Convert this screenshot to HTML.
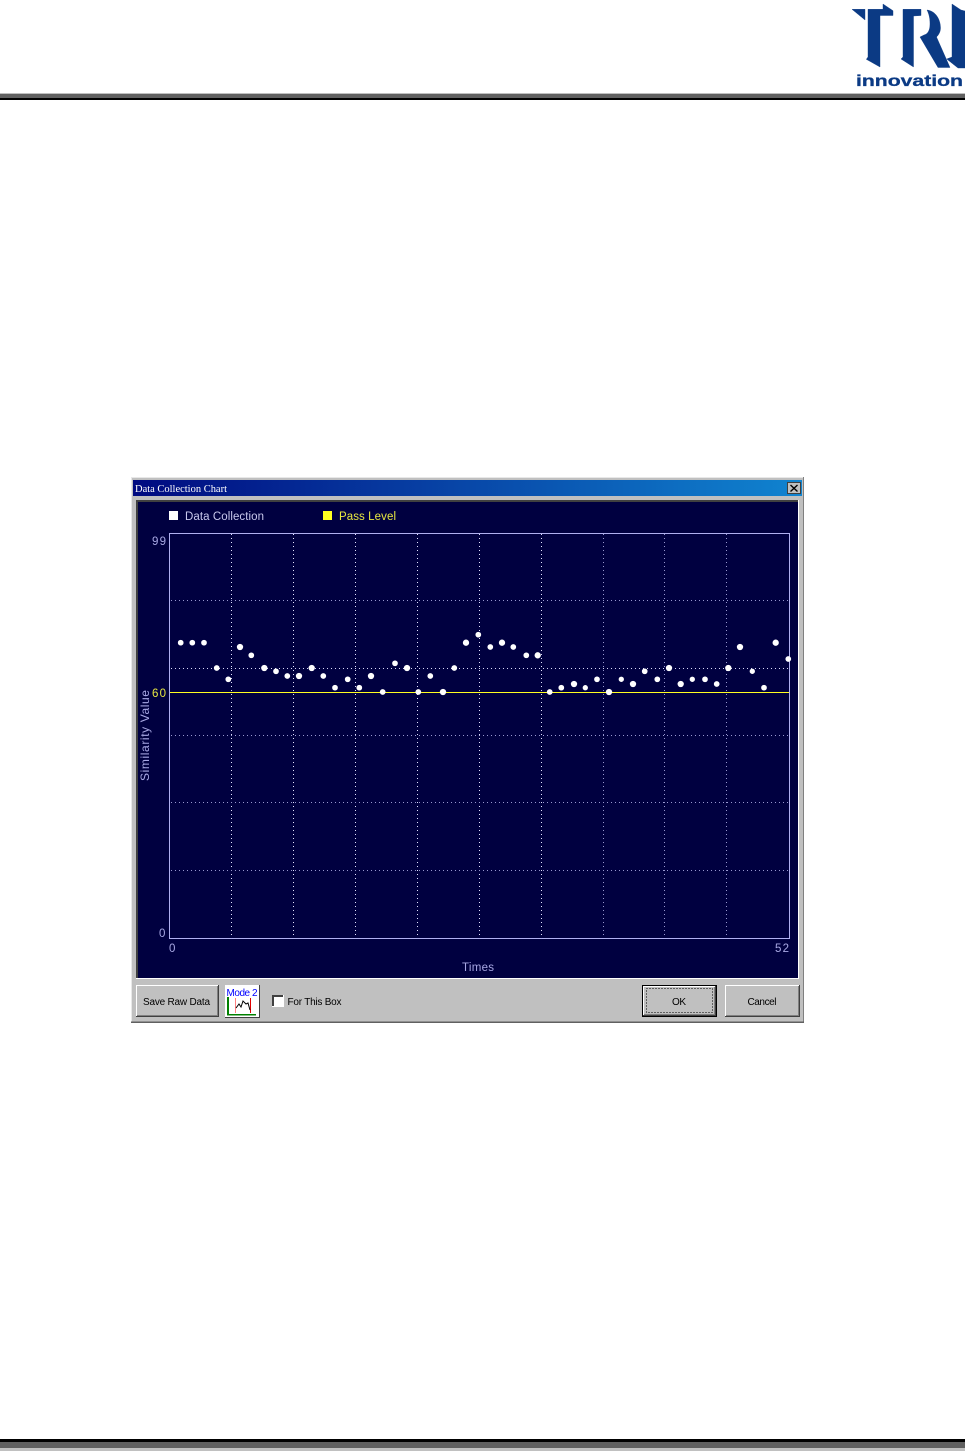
<!DOCTYPE html>
<html>
<head>
<meta charset="utf-8">
<title>Data Collection Chart</title>
<style>
html,body{margin:0;padding:0;background:#fff}
body{width:965px;height:1451px;overflow:hidden;position:relative}
svg{position:absolute;left:0;top:0;display:block}
text{font-family:"Liberation Sans",sans-serif}
</style>
</head>
<body>
<svg width="965" height="1451" viewBox="0 0 965 1451" xmlns="http://www.w3.org/2000/svg">
<defs>
<linearGradient id="tb" x1="0" x2="1" y1="0" y2="0"><stop offset="0" stop-color="#000a80"/><stop offset="1" stop-color="#1084d0"/></linearGradient>
</defs>

<!-- header logo -->
<g fill="#0b3a84" stroke="#0b3a84" stroke-width="0.4">
<polygon points="852,9.3 865,9.3 865,20"/>
<polygon points="868,9.3 883,9.3 883,4 893,10.7 893,15.500 880,15.500 880,67 866.300,59.300 868,57"/>
<polygon points="903,9.3 921,9.3 921,15.500 913.500,16 913.500,67 901,59 903,57"/>
<path d="M927 10C936 11 940.500 20 940.500 28C940.500 32 938.500 35 936.500 37L950 67.500H938L920 37L924 35C928 34 930 30 930 24C930 18 929 14 927 10Z"/>
<polygon points="952,9 952,4 961,10 965,11 965,68 958,68 946.700,59 952,57"/>
</g>
<text x="856" y="86" font-size="16" font-weight="bold" fill="#0b3a84" stroke="#0b3a84" stroke-width="0.3" textLength="107" lengthAdjust="spacingAndGlyphs">innovation</text>

<!-- header rule -->
<rect x="0" y="93" width="965" height="1" fill="#c0c0c0"/>
<rect x="0" y="94" width="965" height="4" fill="#606060"/>
<rect x="0" y="98" width="965" height="2" fill="#000"/>

<!-- footer rule -->
<rect x="0" y="1439" width="965" height="3" fill="#000"/>
<rect x="0" y="1442" width="965" height="6" fill="#606060"/>
<rect x="0" y="1448" width="965" height="3" fill="#c0c0c0"/>

<!-- dialog -->
<rect x="131" y="477" width="673" height="546" fill="#c0c0c0"/>
<rect x="131" y="477" width="673" height="1" fill="#e8e8e8"/>
<rect x="131" y="477" width="1" height="546" fill="#e8e8e8"/>
<rect x="803" y="477" width="1" height="546" fill="#808080"/>
<rect x="131" y="1021.500" width="673" height="1.500" fill="#606060"/>
<rect x="133" y="480" width="669" height="16" fill="url(#tb)"/>
<text x="135" y="492" font-size="10.500" fill="#fff" style="font-family:'Liberation Serif',serif" textLength="92" lengthAdjust="spacingAndGlyphs">Data Collection Chart</text>
<rect x="787.500" y="482.500" width="13" height="11" fill="#c0c0c0" stroke="#404040" stroke-width="1"/>
<path d="M790.500 485L797.500 491.500M797.500 485L790.500 491.500" stroke="#000" stroke-width="1.400"/>

<!-- chart panel -->
<rect x="136" y="500" width="663" height="479" fill="#fff"/>
<rect x="136" y="500" width="662" height="478" fill="#404040"/>
<rect x="138" y="502" width="660" height="476" fill="#000040"/>

<!-- legend -->
<rect x="169" y="511" width="9" height="9" fill="#fff"/>
<text x="185" y="520" font-size="11.500" fill="#c8c8ec" textLength="79" lengthAdjust="spacing">Data Collection</text>
<rect x="323" y="511" width="9" height="9" fill="#ffff20"/>
<text x="339" y="520" font-size="11.500" fill="#e8e840" textLength="57" lengthAdjust="spacing">Pass Level</text>

<!-- grid -->
<g shape-rendering="crispEdges" fill="none">
<g stroke="#e4e4ff" stroke-dasharray="1 3">
<path d="M231.500 534V938M293.500 534V938M355.500 534V938M417.500 534V938M479.500 534V938M541.500 534V938"/>
</g>
<g stroke="#9898d0" stroke-dasharray="1 3">
<path d="M603.500 534V938M664.500 534V938M726.500 534V938"/>
<path d="M171 600.500H789"/>
<path d="M171 735.500H789M171 802.500H789M171 870.500H789"/>
</g>
<path d="M171 668.500H789" stroke="#d8d8f8" stroke-dasharray="1 3"/>
<rect x="169.500" y="533.500" width="620" height="405" stroke="#b0b0f0"/>
<path d="M170 692.500H789" stroke="#ffff20"/>
</g>

<!-- axis labels -->
<g font-size="11.500" fill="#a8a8e4">
<text x="152" y="545" textLength="14" lengthAdjust="spacing">99</text>
<text x="152" y="697" fill="#e8e840" textLength="14" lengthAdjust="spacing">60</text>
<text x="159" y="937">0</text>
<text x="169" y="952">0</text>
<text x="775" y="952" textLength="14" lengthAdjust="spacing">52</text>
<text x="462" y="971" textLength="32" lengthAdjust="spacing">Times</text>
<text transform="translate(149,781) rotate(-90)" font-size="12" textLength="91" lengthAdjust="spacing">Similarity Value</text>
</g>

<!-- data points -->
<g fill="#fff" stroke="#fff" stroke-width="0.7">
<circle cx="180.700" cy="642.700" r="2.500"/><circle cx="192.300" cy="642.700" r="2.500"/><circle cx="204" cy="642.700" r="2.500"/><circle cx="216.700" cy="668" r="2.500"/><circle cx="228.300" cy="679.300" r="2.500"/><circle cx="240" cy="647" r="2.800"/><circle cx="251.300" cy="655.300" r="2.500"/><circle cx="264.300" cy="668" r="2.800"/><circle cx="276" cy="671.300" r="2.500"/><circle cx="287.300" cy="676" r="2.500"/><circle cx="299" cy="676" r="2.800"/><circle cx="311.700" cy="668" r="2.800"/><circle cx="323.300" cy="676" r="2.500"/><circle cx="335" cy="687.700" r="2.500"/><circle cx="347.700" cy="679.300" r="2.500"/><circle cx="359.300" cy="687.700" r="2.500"/><circle cx="371" cy="676" r="2.800"/><circle cx="382.700" cy="692" r="2.500"/><circle cx="395" cy="663.300" r="2.500"/><circle cx="407" cy="668" r="2.800"/><circle cx="418.300" cy="692" r="2.500"/><circle cx="430.300" cy="676" r="2.500"/><circle cx="443" cy="692" r="2.800"/><circle cx="454.300" cy="668" r="2.500"/><circle cx="466" cy="642.700" r="2.800"/><circle cx="478.300" cy="634.700" r="2.500"/><circle cx="490.300" cy="647" r="2.500"/><circle cx="502" cy="642.700" r="2.800"/><circle cx="513.300" cy="647" r="2.500"/><circle cx="526.300" cy="655.300" r="2.500"/><circle cx="537.700" cy="655.300" r="2.800"/><circle cx="549.700" cy="692" r="2.500"/><circle cx="561.300" cy="687.700" r="2.500"/><circle cx="574" cy="684" r="2.800"/><circle cx="585.300" cy="687.700" r="2.300"/><circle cx="597" cy="679.300" r="2.500"/><circle cx="609" cy="692" r="2.800"/><circle cx="621.300" cy="679.300" r="2.300"/><circle cx="633" cy="684" r="2.800"/><circle cx="644.700" cy="671.300" r="2.500"/><circle cx="657.300" cy="679.300" r="2.500"/><circle cx="669" cy="668" r="2.800"/><circle cx="680.700" cy="684" r="2.800"/><circle cx="692.300" cy="679.300" r="2.300"/><circle cx="705" cy="679.300" r="2.500"/><circle cx="716.700" cy="684" r="2.500"/><circle cx="728.300" cy="668" r="2.800"/><circle cx="740" cy="647" r="2.800"/><circle cx="752.300" cy="671.300" r="2.300"/><circle cx="764" cy="687.700" r="2.500"/><circle cx="775.700" cy="642.700" r="2.800"/><circle cx="788.300" cy="659" r="2.500"/>
</g>

<!-- buttons -->
<g shape-rendering="crispEdges">
<rect x="136" y="985" width="83" height="32" fill="#404040"/>
<rect x="136" y="985" width="82" height="31" fill="#fff"/>
<rect x="137" y="986" width="81" height="30" fill="#808080"/>
<rect x="137" y="986" width="80" height="29" fill="#c0c0c0"/>

<rect x="225" y="985" width="35" height="33" fill="#404040"/>
<rect x="225" y="985" width="34" height="32" fill="#fff"/>
<rect x="227" y="997" width="2" height="18" fill="#008000"/>
<rect x="227" y="1014" width="29" height="1.500" fill="#008000"/>
<rect x="235" y="998" width="1" height="15" fill="#ff8080"/>
<rect x="250" y="998" width="1" height="15" fill="#e00000"/>

<rect x="272" y="995" width="12" height="12" fill="#fff"/>
<rect x="272" y="995" width="11" height="11" fill="#404040"/>
<rect x="274" y="997" width="9" height="9" fill="#fff"/>

<rect x="642" y="985" width="75" height="32" fill="#000"/>
<rect x="643" y="986" width="73" height="30" fill="#404040"/>
<rect x="643" y="986" width="72" height="29" fill="#fff"/>
<rect x="644" y="987" width="71" height="28" fill="#808080"/>
<rect x="644" y="987" width="70" height="27" fill="#c0c0c0"/>
<rect x="646.500" y="988.500" width="66" height="24" fill="none" stroke="#000" stroke-dasharray="1 2"/>

<rect x="725" y="985" width="75" height="32" fill="#404040"/>
<rect x="725" y="985" width="74" height="31" fill="#fff"/>
<rect x="726" y="986" width="73" height="30" fill="#808080"/>
<rect x="726" y="986" width="72" height="29" fill="#c0c0c0"/>
</g>
<path d="M236 1008L239 1004L241 1007L243 1001L246 1004L248 1003L250 1010" fill="none" stroke="#000" stroke-width="1"/>
<text x="226.500" y="996" font-size="10" fill="#0000ff" textLength="31" lengthAdjust="spacing">Mode 2</text>
<g font-size="10" fill="#000">
<text x="143" y="1005" textLength="67" lengthAdjust="spacing">Save Raw Data</text>
<text x="287.500" y="1005" textLength="54" lengthAdjust="spacing">For This Box</text>
<text x="672" y="1005" textLength="14" lengthAdjust="spacing">OK</text>
<text x="747.500" y="1005" textLength="29" lengthAdjust="spacing">Cancel</text>
</g>
</svg>
</body>
</html>
